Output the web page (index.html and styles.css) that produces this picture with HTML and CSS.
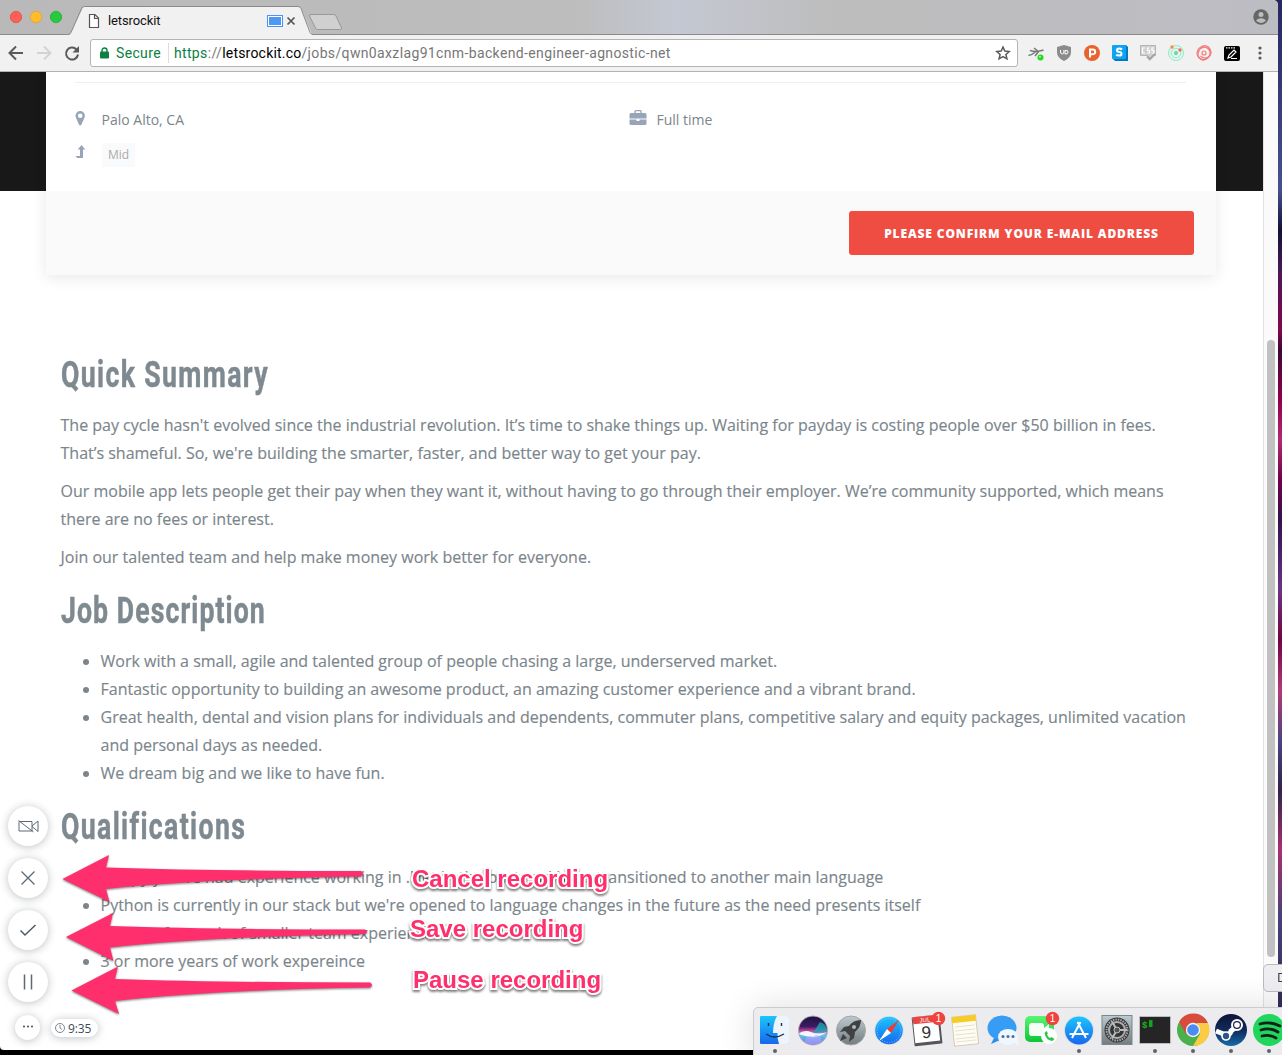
FILE: index.html
```html
<!DOCTYPE html>
<html lang="en">
<head>
<meta charset="utf-8">
<title>letsrockit</title>
<link rel="stylesheet" href="styles.css">
</head>
<body>
<div class="desktop">
<div class="window">
  <header class="titlebar">
    <svg class="tabs" width="360" height="35" viewBox="0 0 360 35">
      <path d="M0 34.5H70L83 7.500q1-1 2-1H298q2 0 3 2L312 34.500H360V35H0z" fill="#f1f1f1"/>
      <path d="M0 34.500H68q2 0 3-2L81.500 8.500q1-2 3-2H298q2 0 3 2L310 32.500q1 2 3 2H360" fill="none" stroke="#8a8a8a"/>
      <path d="M311 14.500H334q1.500 0 2 1.500L341.500 28q0.500 1.500-1 1.500H317.500q-1.500 0-2-1.500L309.500 16q-.5-1.500 1.500-1.500z" fill="#d0d0d0" stroke="#999"/>
      <circle cx="16" cy="17" r="5.700" fill="#ff5f57" stroke="#e2463f" stroke-width=".7"/>
      <circle cx="36" cy="17" r="5.700" fill="#ffbd2e" stroke="#dfa123" stroke-width=".7"/>
      <circle cx="56" cy="17" r="5.700" fill="#28c940" stroke="#1dad2b" stroke-width=".7"/>
      <path d="M89.500 14.500h5.500l3.500 3.500v9.500h-9zM94.500 14.500v4h4" fill="#fff" stroke="#555" stroke-width="1.200"/>
      <rect x="267.500" y="15.500" width="15" height="11" fill="#fff" stroke="#4b93f0"/><rect x="269" y="17" width="12" height="8" fill="#4b98f5"/>
      <path d="M287.500 17.500l7 7m0-7l-7 7" stroke="#555" stroke-width="1.700"/>
    </svg>
    <span class="tab-title">letsrockit</span>
    <svg class="avatar" width="16" height="16" viewBox="0 0 16 16"><circle cx="8" cy="8" r="7.700" fill="#666"/><circle cx="8" cy="5.500" r="2.500" fill="#bdbdbf"/><path d="M3 11.500q2-2.200 5-2.200t5 2.200q-2 2.400-5 2.400t-5-2.400z" fill="#bdbdbf"/></svg>
  </header>
  <div class="toolbar">
    <svg class="nav" width="90" height="36" viewBox="0 0 90 36" fill="none" stroke-width="2">
      <path d="M23 18H10M16 11.500L9.500 18l6.500 6.500" stroke="#5a5a5a"/>
      <path d="M37 18h13M44 11.500l6.500 6.500-6.500 6.500" stroke="#d3d3d3"/>
      <path d="M76.500 14.500A6 6 0 1 0 78 19.500" stroke="#5a5a5a"/><path d="M79 11v6.500h-6.500z" fill="#5a5a5a"/>
    </svg>
    <div class="omnibox">
      <svg class="lock" width="9" height="12" viewBox="0 0 9 12"><path d="M2 5V3.500a2.500 2.500 0 0 1 5 0V5" fill="none" stroke="#0b8043" stroke-width="1.400"/><rect y="4.500" width="9" height="7" rx="1" fill="#0b8043"/></svg>
      <span class="secure">Secure</span><i class="sep"></i>
      <span class="url"><b class="scheme">https</b>://<b class="host">letsrockit.co</b>/jobs/qwn0axzlag91cnm-backend-engineer-agnostic-net</span>
      <svg class="star" width="16" height="16" viewBox="0 0 16 16"><path d="M8 2l1.800 4.100 4.400.4-3.300 3 1 4.300L8 11.500l-3.900 2.300 1-4.300-3.300-3 4.400-.4z" fill="none" stroke="#5a5a5a" stroke-width="1.500"/></svg>
    </div>
    <svg class="extensions" width="260" height="36" viewBox="1018 35 260 36">
      <path d="M1028.500 55.500q4-1 7-3.500M1034 48l5 4M1030 50.500q7 2 13.500-.5M1039 51l-4 5" fill="none" stroke="#777" stroke-width="1.500"/><circle cx="1040.500" cy="57.500" r="3" fill="#20dc18"/><circle cx="1040" cy="56.800" r="1" fill="#a6ff9c"/>
      <path d="M1064 45l7 2v5q0 6-7 9-7-3-7-9v-5z" fill="#8b8b8b"/><path d="M1060.500 50v2q0 2 1.700 2t1.700-2v-2M1065 50.500v3.500h1q2 0 2-2t-2-1.500z" fill="none" stroke="#fff"/>
      <circle cx="1092" cy="53" r="8" fill="#e8632f"/><path d="M1090 57.500v-8h2.800a2.400 2.400 0 0 1 0 4.800H1090" fill="none" stroke="#fff" stroke-width="2"/>
      <path d="M1114 45h12l2 2v14h-13l-3-3z" fill="#0678bd"/><rect x="1112" y="45" width="14" height="14" rx="1" fill="#0fa3f5"/><path d="M1122 49.500q-1-1-3-1t-2 1.700 2.300 1.800 2.200 1.900-2.300 1.700-3-.8" fill="none" stroke="#fff" stroke-width="2"/>
      <path d="M1140.500 45.500h15v10h-3l-3 3-2-3h-7z" fill="#cfcfcf" stroke="#b5b5b5"/><path d="M1145 48h-2.500v5h2.500M1149.500 48h-2v2.500h2V53h-2.500M1154 48h-2v2.500h2V53h-2.500" fill="none" stroke="#fff" stroke-width="1.200"/><path d="M1147 56.500l2.800 2.800 5.200-5.300" fill="none" stroke="#a5a5a5" stroke-width="2"/>
      <g fill="none" stroke="#7ff0c5"><circle cx="1176" cy="53" r="7.500"/><circle cx="1176" cy="53" r="4.800"/></g><circle cx="1176" cy="53" r="2.200" fill="#65dfb4"/><circle cx="1172" cy="47" r="1.700" fill="#ff8a45"/><circle cx="1180" cy="50" r="1.700" fill="#ff6845"/>
      <g fill="none" stroke="#f27d7d" stroke-width="1.200"><path d="M1199 58q-4-5 0-9.500 5-5 9.500-1.500 4.500 5 .5 10-5 4.500-10 1z"/><path d="M1200 49q5-4 8.500 0t-.5 8.500M1208.500 48q4.500 5 .5 8.500t-8.500-.5M1208 58q-5 4-8.500 0t.5-8.500"/><circle cx="1204" cy="53" r="2"/></g>
      <rect x="1224" y="46" width="16" height="15" rx="2" fill="#000"/><path d="M1228 58l1-3 5-5 2 2-5 5zM1231 58.500h6" fill="none" stroke="#fff" stroke-width="1.200"/><path d="M1226 47.800h9" stroke="#fff" stroke-width="1.300" stroke-dasharray="1.500 1"/>
      <g fill="#5a5a5a"><circle cx="1260" cy="48" r="1.600"/><circle cx="1260" cy="53" r="1.600"/><circle cx="1260" cy="58" r="1.600"/></g>
    </svg>
  </div>
  <div class="viewport">
    <main class="page">
      <div class="banner">
        <section class="card">
          <div class="card-body">
            <div class="facts">
              <div class="fact"><svg class="fact-icon" width="15" height="16" viewBox="0 0 15 16"><path fill-rule="evenodd" d="M5.200 1a4.700 4.700 0 0 1 4.700 4.700q0 1.300-.8 2.700L6.500 14.500q-1.300 1.800-2.600 0L1.300 8.400Q.5 7 .5 5.700A4.700 4.700 0 0 1 5.200 1zm0 2.400a2.300 2.300 0 1 0 0 4.600 2.300 2.300 0 0 0 0-4.600z" fill="#98a4b7"/></svg><span class="place">Palo Alto, CA</span></div>
              <div class="fact time"><svg class="case" width="18" height="16" viewBox="0 0 18 16"><path d="M6 3.500V1.500q0-.8.8-.8h4.400q.8 0 .8.800v2" fill="none" stroke="#98a4b7" stroke-width="1.300"/><path d="M2 3h14Q17.500 3 17.500 4.500V8.500H.5v-4Q.5 3 2 3zM.5 9.500h7V11h3V9.500h7v4q0 1.500-1.500 1.500H2Q.5 15 .5 13.500z" fill="#98a4b7"/></svg><span>Full time</span></div>
              <div class="fact level"><svg class="fact-icon" width="15" height="16" viewBox="0 0 15 16"><path d="M6.500 0l3.800 4.500H8V13H2.200L.5 11H5V4.500H2.700z" fill="#98a4b7"/></svg><span class="tag">Mid</span></div>
            </div>
          </div>
          <div class="card-footer"><button class="confirm">PLEASE CONFIRM YOUR E-MAIL ADDRESS</button></div>
        </section>
      </div>
      <article class="details">
        <h2><span class="h-summary">Quick Summary</span></h2>
        <p>The pay cycle hasn't evolved since the industrial revolution. It’s time to shake things up. Waiting for payday is costing people over $50 billion in fees.<br>That’s shameful. So, we're building the smarter, faster, and better way to get your pay.</p>
        <p>Our mobile app lets people get their pay when they want it, without having to go through their employer. We’re community supported, which means<br>there are no fees or interest.</p>
        <p>Join our talented team and help make money work better for everyone.</p>
        <h2><span class="h-description">Job Description</span></h2>
        <ul>
          <li>Work with a small, agile and talented group of people chasing a large, underserved market.</li>
          <li>Fantastic opportunity to building an awesome product, an amazing customer experience and a vibrant brand.</li>
          <li>Great health, dental and vision plans for individuals and dependents, commuter plans, competitive salary and equity packages, unlimited vacation<br>and personal days as needed.</li>
          <li>We dream big and we like to have fun.</li>
        </ul>
        <h2><span class="h-qualifications">Qualifications</span></h2>
        <ul>
          <li>Happy you've had experience working in .Net in the past and have transitioned to another main language</li>
          <li>Python is currently in our stack but we're opened to language changes in the future as the need presents itself</li>
          <li>Looking for work of smaller team experience</li>
          <li>3 or more years of work expereince</li>
        </ul>
      </article>
    </main>
    <div class="scrollbar"><i class="thumb"></i></div>
  </div>
</div>

<div class="recorder">
  <span class="round"><svg width="22" height="16" viewBox="0 0 22 16"><path d="M2 3.500h13v9.500h-13zM15 8l6-5v10.500l-6-5M1.500 2.500l15 11.500" fill="none" stroke="#5d6973"/></svg></span>
  <span class="round"><svg width="16" height="16" viewBox="0 0 16 16"><path d="M1.500 1.500l13 13m0-13l-13 13" stroke="#5d6973" stroke-width="1.300"/></svg></span>
  <span class="round"><svg width="18" height="14" viewBox="0 0 18 14"><path d="M1.500 7.500l4.500 4.500L16.500 2" fill="none" stroke="#4f5c66" stroke-width="1.500"/></svg></span>
  <span class="round"><svg width="12" height="16" viewBox="0 0 12 16"><path d="M2.500.5v15m7-15v15" stroke="#5d6973" stroke-width="1.500"/></svg></span>
  <div class="status"><span class="more"><svg width="12" height="4" viewBox="0 0 12 4"><g fill="#4f5c66"><circle cx="2" cy="1.500" r="1.100"/><circle cx="6" cy="1.500" r="1.100"/><circle cx="10" cy="1.500" r="1.100"/></g></svg></span>
  <span class="timer"><svg width="10" height="10" viewBox="0 0 10 10"><path d="M5 2v3l2 1.500M5 .5a4.500 4.500 0 1 1 0 9 4.500 4.500 0 0 1 0-9z" fill="none" stroke="#5d6973" stroke-width=".8"/></svg>9:35</span></div>
</div>

<svg class="arrows" width="320" height="170" viewBox="60 850 320 170" fill="#ff2f6d">
  <path d="M62.500 879L109 855L106 867.500Q210 871 361 871Q365 873 361 876.500Q200 879 106 889L109.500 902z"/>
  <path d="M66 937L113 913L110 926Q214 929.500 365 929.500Q369 931.500 365 934Q204 937 110 947.500L113.500 961z"/>
  <path d="M71.500 990.500L118 966.500L115 979Q219 982.500 370 982.500Q374 985 370 987.500Q209 990 115 1001L119 1014z"/>
</svg>
<span class="note cancel">Cancel recording</span>
<span class="note save">Save recording</span>
<span class="note pause">Pause recording</span>

<div class="dock-label"></div>
<svg class="label-icon" width="4" height="12" viewBox="0 0 4 12"><path d="M4 1.500H.8v8h3.200" fill="none" stroke="#444" stroke-width="1.200"/></svg>
<div class="dock">
<svg width="529" height="48" viewBox="753 1007 529 48">
  <defs>
    <linearGradient id="blue" x2="0" y2="1"><stop stop-color="#1cc5fb"/><stop offset="1" stop-color="#1767ef"/></linearGradient>
    <linearGradient id="siri" x2="0" y2="1"><stop stop-color="#1b1440"/><stop offset=".35" stop-color="#3d1b62"/><stop offset=".5" stop-color="#c4459f"/><stop offset=".62" stop-color="#63c8ee"/><stop offset="1" stop-color="#5a68e0"/></linearGradient>
    <linearGradient id="gray" x2="0" y2="1"><stop stop-color="#bccbd0"/><stop offset="1" stop-color="#737b7e"/></linearGradient>
    <linearGradient id="green" x2="0" y2="1"><stop stop-color="#5bf473"/><stop offset="1" stop-color="#0dc536"/></linearGradient>
    <linearGradient id="steam" x2="0" y2="1"><stop stop-color="#101438"/><stop offset=".5" stop-color="#102a58"/><stop offset="1" stop-color="#176aa8"/></linearGradient>
    <clipPath id="orb"><circle cx="813" cy="1030.500" r="14"/></clipPath>
  </defs>
  <rect x="760" y="1016" width="29" height="28" rx="1" fill="url(#blue)"/><path d="M777 1016h11q1 0 1 1v26q0 1-1 1h-9q-2-6-1.500-11H773q0-10 4-17z" fill="#edf4fb"/><path d="M768.500 1023v3M781.500 1023v3M766 1034q8 6 18 0" fill="none" stroke="#17344f" stroke-width="1.400"/>
  <circle cx="813" cy="1030.500" r="15" fill="#aaa9b2"/><g clip-path="url(#orb)"><rect x="798" y="1016" width="30" height="30" fill="url(#siri)"/><path d="M820 1022q6 2 8 9l-15 2z" fill="#17aab4" opacity=".8"/><path d="M798 1034q7-5 13-2t17 0q-7 4-12 5t-18-3z" fill="#fff" opacity=".9"/><path d="M804 1045q1-9 6-9t6 9M810 1045q2-11 7-10t5 10" fill="#b9a4ff" opacity=".6"/></g>
  <circle cx="851" cy="1030.500" r="14.500" fill="url(#gray)" stroke="#a4a6a8"/><path d="M861 1020q-8 0-12 6l-5 1-4 5 5-1 5 5-1 6 5-4 1-6q6-5 6-12zM843 1034l4 4-7 3z" fill="#3f4143"/><circle cx="854" cy="1027" r="2" fill="#b0b8ba"/>
  <circle cx="889" cy="1030.500" r="15" fill="#e2e5e8"/><circle cx="889" cy="1030.500" r="13.800" fill="url(#blue)"/><circle cx="889" cy="1030.500" r="12" fill="none" stroke="#86ccff" stroke-dasharray="1 1.500"/><path d="M899 1020l-8 13-4-4z" fill="#f23b2f"/><path d="M879 1041l8-12 4 4z" fill="#fff"/>
  <g transform="rotate(-6 926 1030)"><rect x="913" y="1016" width="28" height="29" rx="1" fill="#54565b"/><rect x="914" y="1016" width="25" height="26" fill="#fff"/><rect x="914" y="1016" width="25" height="7" fill="#e84541"/><text x="926" y="1022" class="cal-month">JUL</text><text x="926" y="1038" class="cal-day">9</text></g><circle cx="938.500" cy="1018.500" r="6.700" fill="#f1423c"/><text x="938.500" y="1022" class="badge">1</text>
  <g transform="rotate(-6 965 1030)"><rect x="953" y="1016" width="24" height="29" fill="#fffdf2" stroke="#c8bc9f" stroke-width=".7"/><rect x="953" y="1016" width="24" height="6" fill="#f8cc28"/><path d="M955 1026h20m-20 4h20m-20 4h20m-20 4h20m-20 3h20" stroke="#d9d5ca" stroke-width=".7"/></g>
  <ellipse cx="1002" cy="1028" rx="14.500" ry="12.500" fill="#379cf4"/><path d="M994 1038l-3 6 9-4z" fill="#248eed"/><ellipse cx="1008" cy="1037" rx="10" ry="8" fill="#eef6ff"/><path d="M1014 1042l5 4-1-8z" fill="#eef6ff"/><g fill="#4c6d94"><circle cx="1003" cy="1036.500" r="1.500"/><circle cx="1008" cy="1036.500" r="1.500"/><circle cx="1013" cy="1036.500" r="1.500"/></g>
  <rect x="1025" y="1016" width="29" height="26" rx="5" fill="url(#green)"/><rect x="1029" y="1023" width="15" height="13" rx="3" fill="#f5fff6"/><path d="M1044 1028l5-4v10l-5-3z" fill="#f5fff6"/><circle cx="1049" cy="1036" r="8" fill="#fff"/><path d="M1044.500 1033q1 7 8 8l2-2-3-2-1.500 1q-2-1-3-3.500l1-1-1.500-2.500z" fill="#28c84a"/><circle cx="1052.500" cy="1018.500" r="6.700" fill="#f1423c"/><text x="1052.500" y="1022" class="badge">1</text>
  <circle cx="1079" cy="1030.500" r="15" fill="#d9dfe5"/><circle cx="1079" cy="1030.500" r="14" fill="url(#blue)"/><path d="M1072 1038l8.500-16M1077.500 1022l8.500 16M1069.500 1034h19" stroke="#fff" stroke-width="2"/>
  <rect x="1102" y="1015.500" width="30" height="29" fill="url(#gray)" stroke="#7d868b"/><circle cx="1117" cy="1030" r="12.500" fill="#333639"/><circle cx="1117" cy="1030" r="10.500" fill="none" stroke="#aaa" stroke-width="2" stroke-dasharray="1.500 1"/><circle cx="1117" cy="1030" r="8" fill="none" stroke="#b0b0b0" stroke-width="2"/><circle cx="1117" cy="1030" r="3" fill="#555" stroke="#bbb"/><path d="M1120 1030h7m-11.500-2.600l-3.500-6m3.500 11.200l-3.500 6" stroke="#bbb" stroke-width="2"/>
  <rect x="1139.500" y="1016.500" width="31" height="27" rx="1" fill="#252525" stroke="#bbb"/><text x="1142" y="1028" class="prompt">$</text><rect x="1149" y="1020" width="3.500" height="7" fill="#15a518"/>
  <g transform="translate(1193 1030)"><circle r="16" fill="#4baf4b"/><path d="M-13.800-8A16 16 0 0 1 15-7H0L-7 4z" fill="#d94b3d"/><path d="M15-7A16 16 0 0 1 0 16L7 4 4-7z" fill="#fccb45"/><circle r="7.200" fill="#f5f5f5"/><circle r="5.800" fill="#4c8bf1"/></g>
  <circle cx="1231" cy="1030" r="16" fill="url(#steam)"/><path d="M1216 1031l10 4q5-1 5-4l6-5" fill="none" stroke="#fff" stroke-width="5"/><circle cx="1237" cy="1025" r="5" fill="#18234b" stroke="#fff" stroke-width="2"/><circle cx="1237" cy="1025" r="2.800" fill="#fff"/><circle cx="1226" cy="1036" r="4" fill="#355283" stroke="#fff" stroke-width="1.700"/>
  <circle cx="1269" cy="1030" r="16" fill="#20d65d"/><path d="M1260 1024q10-3 20 2M1261 1030q9-3 17 2M1262 1036q7-2 14 2" fill="none" stroke="#142018" stroke-width="2.800" stroke-linecap="round"/>
  <g fill="#616166"><circle cx="775" cy="1051" r="2"/><circle cx="1079" cy="1051" r="2"/><circle cx="1155" cy="1051" r="2"/><circle cx="1193" cy="1051" r="2"/><circle cx="1231" cy="1051" r="2"/><circle cx="1269" cy="1051" r="2"/></g>
</svg>
</div>
</div>
</body>
</html>
```
FILE: styles.css
```css
*{box-sizing:border-box}
body{margin:0;overflow:hidden;font-family:"Open Sans",sans-serif;color:#7b858c}
svg{display:block;flex:none}
.desktop{position:relative;width:1282px;height:1055px;overflow:hidden;background:linear-gradient(90deg,#000 1263px,transparent 1263px),linear-gradient(#27265e,#484f91 190px,#0f1237 230px,#491658 270px,#820551 330px,#3c0737 350px,#8e0050 400px,#b32874 440px,#6f004d 480px,#35114e 520px,#6b3381 590px,#720346 640px,#b33976 690px,#4f4381 740px,#30234e 790px,#a83070 850px,#45417a 920px,#222243 1055px)}
.window{width:1278px;height:1050px;display:flex;flex-direction:column;background:#fff;border-radius:0 5px 4px 4px;overflow:hidden}
.titlebar{height:35px;display:flex;flex:none;background:linear-gradient(90deg,#b9b9b9,#bdbdbd 45%,#c4c8d2 53%,#bdbdbd 65%,#bcbcc3);border-bottom:1px solid #8a8a8a}
.tabs{height:35px}
.tab-title{font:13px "Roboto",sans-serif;color:#111;line-height:15px;margin:13px 0 0 -252px;letter-spacing:-.12px}
.avatar{margin:9px 9px 0 auto}
.toolbar{height:37px;display:flex;flex:none;background:#f1f1f1;border-bottom:1px solid #b2b2b2}
.omnibox{width:928px;height:28px;margin-top:4px;background:#fff;border:1px solid #b4b4b4;border-radius:3px;display:flex;align-items:center;padding:0 6px 0 9px;font:14px "Roboto",sans-serif;white-space:nowrap}
.secure{color:#0b8043;margin-left:7px;letter-spacing:.35px}
.sep{width:1px;height:20px;background:#ddd;margin:0 5px 0 7px}
.url{color:#777;letter-spacing:.36px}
.url b{font-weight:400}
.url .scheme{color:#0b8043}
.url .host{color:#000;letter-spacing:.2px}
.star{margin-left:auto}
.viewport{display:flex;height:978px}
.page{width:1263px;overflow:hidden}
.banner{height:119px;background:#181818;padding:0 47px 0 46px}
.card{height:203px;background:#fafafa;box-shadow:0 3px 14px rgba(0,0,0,.09)}
.card-body{height:119px;background:#fff;padding:10px 30px 0 29px}
.facts{border-top:1px solid #eee;display:grid;grid-template-columns:554px 1fr;padding-top:26px;font-size:14px}
.fact{height:35px;display:flex;align-items:flex-start;line-height:22px}
.fact-icon{margin-top:1px}
.level{margin-top:-1px}
.level .fact-icon{margin-top:2px}
.case{margin-top:1px}
.place{margin-left:11.5px}
.time span{margin-left:9.5px}
.tag{margin-left:12px;background:#f9fafb;color:#aaa;font-size:12px;line-height:24px;padding:0 6px}
.card-footer{height:84px;padding:20px 22px;display:flex;justify-content:flex-end}
.confirm{width:345px;height:44px;border:0;border-radius:3px;background:#f04d42;color:#fff;font:800 12px "Open Sans",sans-serif;letter-spacing:.87px}
.details{padding:160px 59.5px 0 60.5px;font-size:16px;line-height:28px;white-space:nowrap}
.details p,.details li{-webkit-text-stroke:.15px #7b858c}
h2{font:700 37px/48px Roboto,sans-serif;color:#7e8990;margin:0 0 12px;height:48px}
h2 span{display:inline-block;transform-origin:0 50%;transform:scaleX(.72);letter-spacing:1.9px;-webkit-text-stroke:.5px #7e8990}
.h-description{letter-spacing:1.5px}
p{margin:0 0 10px}
ul{margin:0 0 16px;padding-left:40px}
p+h2{margin-top:16px}
.scrollbar{width:15px;background:#fafafa;border-left:1px solid #e2e2e2;padding:268px 3px 0}
.thumb{display:block;width:8px;height:617px;border-radius:4px;background:#c1c1c1}
.recorder{position:absolute;left:8px;top:806px;display:flex;flex-direction:column;gap:12px}
.round,.more{width:40px;height:40px;border-radius:50%;background:#fff;display:flex;align-items:center;justify-content:center;box-shadow:0 1px 8px rgba(50,60,70,.32)}
.status{display:flex;gap:11px;padding-left:7px;align-items:center;height:26px;margin-top:0}
.more{width:25px;height:25px}
.timer{height:18px;width:47px;margin-top:2px;border-radius:9px;background:#fff;box-shadow:0 1px 8px rgba(50,60,70,.32);display:flex;align-items:center;gap:3px;padding-left:4px;font-size:12px;color:#3f4b54;letter-spacing:-.1px}
.arrows{position:absolute;left:60px;top:850px;filter:drop-shadow(0 1px 1px rgba(0,0,0,.5))}
.note{position:absolute;font:700 24px/28px "Liberation Sans",sans-serif;color:#ff2f6d;white-space:nowrap;-webkit-text-stroke:4px #fff;paint-order:stroke fill;filter:drop-shadow(0 2px 1px rgba(0,0,0,.5))}
.cancel{left:412px;top:865px}
.save{left:410px;top:915px}
.pause{left:413px;top:966px}
.dock{position:absolute;left:753px;top:1007px;width:540px;height:54px;background:#ececee;border:1px solid #ccc;border-radius:5px 0 0;box-shadow:0 0 35px rgba(0,0,0,.13)}
.dock svg{margin:-1px}
.dock-label{position:absolute;left:1263px;top:964px;width:30px;height:28px;border:1px solid #bbb;border-radius:5px;background:#eeedf1}
.label-icon{position:absolute;left:1278px;top:972px}
.badge,.cal-month,.cal-day{font-family:"Liberation Sans",sans-serif;text-anchor:middle;font-size:10px;fill:#fff}
.cal-month{font-size:6px}
.cal-day{font-size:17px;fill:#333}
.prompt{font:700 9px "Liberation Mono",monospace;fill:#15b91b}
```
